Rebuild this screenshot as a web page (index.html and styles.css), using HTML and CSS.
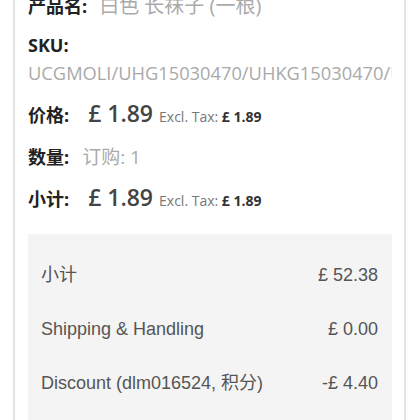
FILE: index.html
```html
<!DOCTYPE html>
<html lang="zh">
<head>
<meta charset="utf-8">
<link rel="stylesheet" href="styles.css">
</head>
<body>
<div class="card">
  <div class="item">
    <div class="row name-row"><span class="label">产品名:</span><span class="muted name">白色 长袜子 (一根)</span></div>
    <div class="sku-label label">SKU:</div>
    <div class="sku-val muted">UCGMOLI/UHG15030470/UHKG15030470/UHG15030471</div>
    <div class="row price-row"><span class="label">价格:</span><span class="amount">£ 1.89</span><span class="excl">Excl. Tax: <b>£ 1.89</b></span></div>
    <div class="row qty-row"><span class="label">数量:</span><span class="muted qty">订购: 1</span></div>
    <div class="row price-row"><span class="label">小计:</span><span class="amount">£ 1.89</span><span class="excl">Excl. Tax: <b>£ 1.89</b></span></div>
  </div>
  <div class="totals">
    <div class="trow"><span>小计</span><span>£ 52.38</span></div>
    <div class="trow"><span>Shipping &amp; Handling</span><span>£ 0.00</span></div>
    <div class="trow"><span>Discount (dlm016524, 积分)</span><span>-£ 4.40</span></div>
  </div>
</div>
</body>
</html>
```

FILE: styles.css
```css
html, body {
  margin: 0;
  padding: 0;
  background: #fff;
  overflow: hidden;
}
body {
  font-family: "Open Sans", "Noto Sans CJK SC", sans-serif;
  color: #222;
}
.card {
  margin: -8px 14px 0 13px;
  border-left: 2px solid #e4e4e4;
  border-right: 2px solid #e4e4e4;
  padding: 0 12px 40px 13px;
  height: 460px;
}
.row {
  display: flex;
  align-items: baseline;
  white-space: nowrap;
  line-height: 28px;
}
.label {
  font-family: "Open Sans", "Noto Sans CJK SC", sans-serif;
  font-weight: 700;
  font-size: 18px;
  color: #222;
}
.muted {
  color: #aaa;
  font-size: 19px;
}
.name {
  margin-left: 12px;
  font-size: 20px;
}
.name-row {
  height: 28px;
}
.sku-label {
  margin-top: 12px;
  line-height: 26px;
}
.sku-val {
  font-size: 18.3px;
  line-height: 28px;
  margin-top: 1px;
  white-space: nowrap;
  overflow: hidden;
  color: #a9a9a9;
}
.price-row {
  margin-top: 12px;
}
.amount {
  font-size: 23px;
  font-weight: 600;
  color: #444;
  margin-left: 19px;
  margin-right: 6px;
}
.excl {
  font-size: 14px;
  color: #777;
}
.excl b {
  color: #333;
  font-weight: 700;
}
.qty-row {
  margin-top: 12px;
}
.qty {
  margin-left: 13px;
}
.totals {
  margin-top: 19px;
  background: #f4f4f4;
  padding: 14px 14px 30px 13px;
  font-family: "Liberation Sans", "Noto Sans CJK SC", sans-serif;
  font-size: 18px;
  color: #555;
}
.trow {
  display: flex;
  justify-content: space-between;
  line-height: 24px;
  padding: 15px 0;
}
```
